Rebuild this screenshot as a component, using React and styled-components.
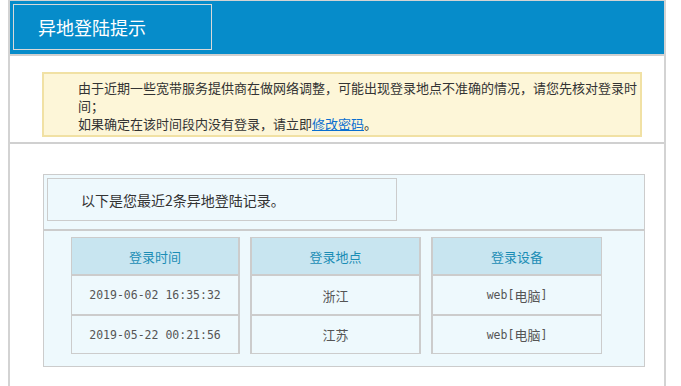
import React from "react";
import styled, { createGlobalStyle, css } from "styled-components";

const GlobalStyle = createGlobalStyle`
    body {
        margin: 0;
        background: #fff;
        font-family: "Noto Sans CJK SC", "Noto Sans", sans-serif;
    }
`;

// outer frame
const Page = styled.div`
    margin-left: 8px;
    width: 658px;
    min-height: 400px;
    box-sizing: border-box;
    border: 2px solid #d3d3d3;
    border-top-width: 1px;
    border-bottom: none;
    background: #fff;
`;

const Header = styled.div`
    height: 50px;
    padding: 3px 3px 0;
    background-color: #068cca;
    border-bottom: 2px solid #d0d0d0;
`;

const TitleBox = styled.div`
    width: 199px;
    height: 46px;
    box-sizing: border-box;
    border: 1px solid #d9d9d9;
    display: flex;
    align-items: center;
    padding-left: 24px;
    color: #fff;
    font-size: 18px;
`;

const Section = styled.div`
    padding: ${(p) => p.$pad};
    ${(p) =>
        p.$divider &&
        css`
            border-bottom: 2px solid #d0d0d0;
        `}
`;

const Warning = styled.div`
    width: 600px;
    box-sizing: border-box;
    border: 2px solid #f1e1a4;
    background: #fdf6d8;
    padding: 5px 0 2px 34px;
    color: #333;
    font-size: 13px;
    line-height: 18px;

    a {
        color: #0a6fd0;
        text-decoration: underline;
    }
`;

const RecordBox = styled.div`
    width: 602px;
    box-sizing: border-box;
    border: 1px solid #cccccc;
    background: #eef9fd;
    padding: 3px 3px 12px;
`;

const Notice = styled.div`
    width: 350px;
    height: 43px;
    box-sizing: border-box;
    border: 1px solid #cccccc;
    display: flex;
    align-items: center;
    padding-left: 33px;
    color: #333;
    font-size: 14px;
`;

const Divider = styled.div`
    height: 2px;
    background: #cccccc;
    margin: 8px -3px 6px;
`;

const Table = styled.div`
    margin-left: 24px;
    width: 531px;
    display: grid;
    grid-template-columns: 169px 171px 171px;
    column-gap: 10px;
`;

const Cell = styled.div`
    box-sizing: border-box;
    display: flex;
    align-items: center;
    justify-content: center;
    border: 0 solid #cccccc;
    border-left-width: ${(p) => (p.$col === 0 ? 1 : 2)}px;
    border-right-width: ${(p) => (p.$col === 2 ? 1 : 2)}px;
    border-top-width: ${(p) => (p.$head ? 1 : 2)}px;
    border-bottom-width: ${(p) => (p.$last ? 1 : 0)}px;
    height: ${(p) => (p.$head ? 37 : 40)}px;
    background: ${(p) => (p.$head ? "#c8e5f0" : "#eef9fd")};
    color: ${(p) => (p.$head ? "#1b8db5" : "#555")};
    font-size: 13px;
`;

const Mono = styled.span`
    font-family: "DejaVu Sans Mono", "Liberation Mono", monospace;
    font-size: 11.5px;
`;

const records = [
    { time: "2019-06-02 16:35:32", place: "浙江" },
    { time: "2019-05-22 00:21:56", place: "江苏" },
];

export default function App() {
    return (
        <Page>
            <GlobalStyle />
            <Header>
                <TitleBox>异地登陆提示</TitleBox>
            </Header>
            <Section $pad="16px 22px 5px 32px" $divider>
                <Warning>
                    由于近期一些宽带服务提供商在做网络调整，可能出现登录地点不准确的情况，请您先核对登录时间；
                    <br />
                    如果确定在该时间段内没有登录，请立即<a href="#">修改密码</a>。
                </Warning>
            </Section>
            <Section $pad="30px 19px 0 33px">
                <RecordBox>
                    <Notice>以下是您最近2条异地登陆记录。</Notice>
                    <Divider />
                    <Table>
                        {["登录时间", "登录地点", "登录设备"].map((h, i) => (
                            <Cell key={h} $col={i} $head>
                                {h}
                            </Cell>
                        ))}
                        {records.map((r, ri) => {
                            const last = ri === records.length - 1;
                            return (
                                <React.Fragment key={r.time}>
                                    <Cell $col={0} $last={last}>
                                        <Mono>{r.time}</Mono>
                                    </Cell>
                                    <Cell $col={1} $last={last}>
                                        {r.place}
                                    </Cell>
                                    <Cell $col={2} $last={last}>
                                        <Mono>web[</Mono>电脑<Mono>]</Mono>
                                    </Cell>
                                </React.Fragment>
                            );
                        })}
                    </Table>
                </RecordBox>
            </Section>
        </Page>
    );
}
